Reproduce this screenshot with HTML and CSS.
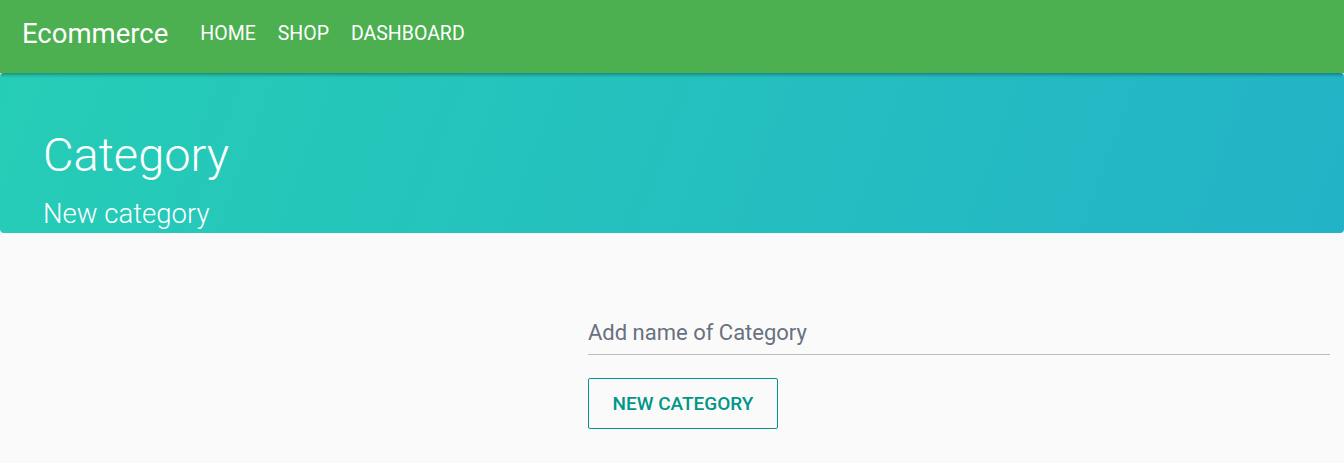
FILE: index.html
```html
<!DOCTYPE html>
<html lang="en">
<head>
<meta charset="utf-8">
<title>Ecommerce</title>
<link rel="stylesheet" href="styles.css">
</head>
<body>
<nav class="navbar">
  <a class="brand" href="#">Ecommerce</a>
  <ul class="nav-links">
    <li><a href="#">HOME</a></li>
    <li><a href="#">SHOP</a></li>
    <li><a href="#">DASHBOARD</a></li>
  </ul>
</nav>
<header class="jumbotron">
  <h1 class="title">Category</h1>
  <p class="subtitle">New category</p>
</header>
<main class="content">
  <div class="spacer"></div>
  <form class="form">
    <input class="field" type="text" placeholder="Add name of Category">
    <div><button class="btn" type="button">NEW CATEGORY</button></div>
  </form>
</main>
</body>
</html>
```
FILE: styles.css
```css
* { box-sizing: border-box; }
html, body { margin: 0; padding: 0; }
body {
  font-family: Roboto, "Liberation Sans", sans-serif;
  background: #fafafa;
  color: #212529;
}
.navbar {
  position: relative;
  z-index: 2;
  height: 73px;
  background: #4caf50;
  display: flex;
  align-items: center;
  padding: 0 22px 6px;
  box-shadow: 0 2px 3px rgba(0,0,0,0.3);
}
.brand {
  color: #fff;
  text-decoration: none;
  font-size: 27.5px;
  margin-right: 32px;
}
.nav-links {
  list-style: none;
  display: flex;
  gap: 22px;
  margin: 0;
  padding: 0;
}
.nav-links a {
  color: #fff;
  text-decoration: none;
  font-size: 19.5px;
}
.jumbotron {
  height: 160px;
  border-radius: 4px;
  background: linear-gradient(110deg, #26cdb6 0%, #23b3c7 100%);
  color: #fff;
  padding: 56px 43px 0;
  overflow: hidden;
}
.title {
  margin: 0;
  font-size: 47px;
  font-weight: 300;
  line-height: 52px;
}
.subtitle {
  margin: 18px 0 0;
  font-size: 27.5px;
  font-weight: 300;
  line-height: 30px;
}
.content {
  display: flex;
  padding: 82px 14px 0 0;
}
.spacer { width: 588px; flex: none; }
.form { flex: 1; }
.field {
  display: block;
  width: 100%;
  border: none;
  border-bottom: 1px solid #bdbdbd;
  background: transparent;
  font-family: Roboto, "Liberation Sans", sans-serif;
  font-size: 22px;
  height: 40px;
  padding: 0 0 4px;
  outline: none;
  color: #697080;
}
.field::placeholder { color: #697080; opacity: 1; }
.btn {
  margin-top: 23px;
  width: 190px;
  height: 51px;
  border: 1px solid #009688;
  border-radius: 2px;
  background: transparent;
  color: #009688;
  font-family: Roboto, "Liberation Sans", sans-serif;
  font-size: 19px;
  font-weight: 500;
  padding: 0;
}
```
